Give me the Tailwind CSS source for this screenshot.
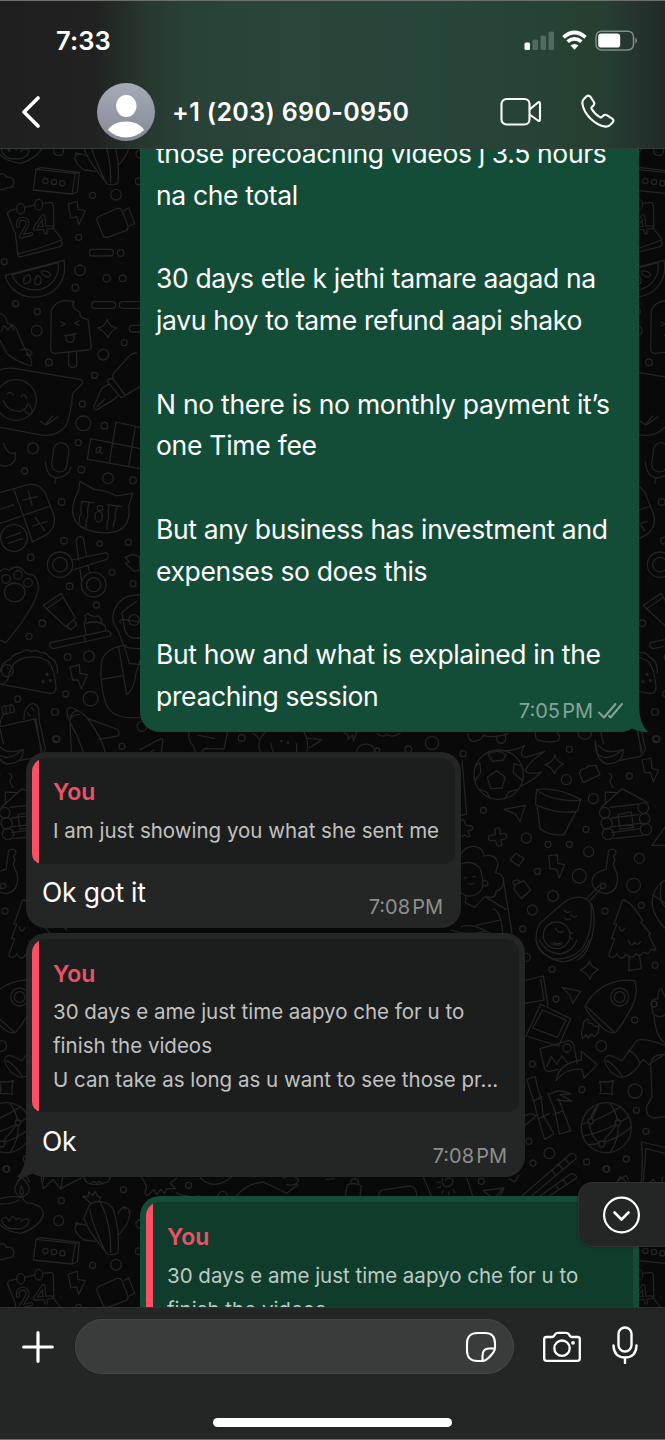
<!DOCTYPE html>
<html lang="en">
<head>
<meta charset="utf-8">
<meta name="viewport" content="width=device-width, initial-scale=1">
<title>Chat</title>
<script src="https://cdn.jsdelivr.net/npm/@tailwindcss/browser@4"></script>
</head>
<body class="bg-black">
<div class="relative flex h-[1440px] w-[665px] flex-col overflow-hidden bg-[#090909] font-['Inter','Liberation_Sans',sans-serif] text-white">

  <!-- Header: status bar and contact bar -->
  <header class="relative z-10 flex h-[149px] flex-none flex-col border-t border-b border-t-[#6c716e] border-b-[#313c37] bg-[linear-gradient(90deg,#1f1f1f_0%,#202120_14%,#27382f_22%,#294238_29%,#2a453a_45%,#27453a_62%,#254436_80%,#26402f_88%,#263e34_91%,#24332d_96%,#212a27_100%)]">
    <div class="flex h-[78px] flex-none items-center justify-between pr-[27px] pl-[56px]">
      <div class="pt-[3px] text-[25.500px] font-semibold tracking-[0.1px]">7:33</div>
      <svg class="h-[30px] w-[114px]" viewBox="0 0 114 30" fill="none">
        <rect x="0.5" y="17.500" width="5.500" height="7.500" rx="1.500" fill="#fff"/>
        <rect x="8.500" y="14.500" width="5.500" height="10.500" rx="1.500" fill="#536a60"/>
        <rect x="16.500" y="10.500" width="5.500" height="14.500" rx="1.500" fill="#536a60"/>
        <rect x="24.500" y="6.500" width="5.500" height="18.500" rx="1.500" fill="#536a60"/>
        <g stroke="#fff" stroke-width="3.700">
          <path d="M39.500 12.300 Q50.500 2.700 61.500 12.300"/>
          <path d="M43.600 16.700 Q50.500 10.900 57.400 16.700"/>
        </g>
        <path d="M46.500 20.600 Q50.500 17.600 54.500 20.600 L50.500 24.800Z" fill="#fff"/>
        <rect x="72" y="6.200" width="37.500" height="18.800" rx="5.500" stroke="#7d8f87" stroke-width="1.500"/>
        <rect x="74.200" y="8.600" width="22" height="14" rx="3.200" fill="#fff"/>
        <path d="M111.300 12.200 q3.400 3.400 0 6.800Z" fill="#7d8f87"/>
      </svg>
    </div>
    <div class="flex flex-1 items-center pb-[3px] pl-[20px]">
      <svg class="mb-[2px] h-[34px] w-[22px] flex-none" viewBox="0 0 22 34" fill="none" stroke="#fff" stroke-width="3.600" stroke-linecap="round" stroke-linejoin="round"><path d="M18 4 L4 18 L18 32"/></svg>
      <svg class="ml-[55px] h-[58px] w-[58px] flex-none" viewBox="0 0 58 58">
        <defs>
          <linearGradient id="av" x1="0" y1="0" x2="0" y2="1"><stop offset="0" stop-color="#a6abb8"/><stop offset="1" stop-color="#858995"/></linearGradient>
          <clipPath id="avc"><circle cx="29" cy="29" r="25.500"/></clipPath>
        </defs>
        <circle cx="29" cy="29" r="29" fill="url(#av)"/>
        <ellipse cx="29.300" cy="23" rx="10.300" ry="11" fill="#fff"/>
        <ellipse cx="29" cy="51" rx="19" ry="12.500" fill="#fff" clip-path="url(#avc)"/>
      </svg>
      <div class="ml-[17px] w-[238px] flex-none pt-[2px] text-[25px] font-semibold tracking-[0.350px] whitespace-nowrap">+1 (203) 690-0950</div>
      <svg class="ml-[90px] h-[30px] w-[42px] flex-none" viewBox="0 0 42 30" fill="none" stroke="#fff" stroke-width="2.100" stroke-linejoin="round">
        <rect x="1.500" y="2" width="28" height="25.500" rx="5"/>
        <path d="M29.500 12.500 L38 5.500 Q40 4.500 40 6.500 V22.500 Q40 24.600 38 23.500 L29.500 17.500"/>
      </svg>
      <svg class="mb-[2px] ml-[39px] h-[34px] w-[34px] flex-none" viewBox="0 0 34 34" fill="none" stroke="#fff" stroke-width="2.100" stroke-linejoin="round">
        <path d="M3.500 4.300 L6 2 Q8 1 9.600 3 L13 8.300 Q13.800 10 12.600 11.300 L10.700 13.200 Q10.200 14 10.700 15 Q14 20.500 19 23.200 Q20 23.700 20.800 23 L22.800 21.200 Q24.200 20.200 25.800 21.200 L31.500 24.800 Q33.200 26.200 31.800 28.200 L29.800 30.400 Q27.600 32.800 24.500 32.600 C13.500 31 3 20 1.400 9.800 Q1 6.600 3.500 4.300Z"/>
      </svg>
    </div>
  </header>

  <!-- Doodle wallpaper, repeated every 600 by 1070 pixels -->
  <svg class="absolute inset-0 h-[1440px] w-[665px]" viewBox="0 0 665 1440" fill="none" stroke="#242424" stroke-linecap="round" stroke-linejoin="round">
    <defs>
      <g id="tile" stroke-width="3.800">
        <g transform="translate(0 140) scale(.33333)">
          <path d="M0 102 Q18 100 18 112 Q40 108 42 128 Q40 146 20 143 Q8 152 0 148"/>
          <path d="M108 88 L226 100 L216 162 L100 150Z M108 88 L122 83 L238 97 L226 100 M238 97 L232 156 L216 162"/>
          <circle cx="136" cy="123" r="8"/><circle cx="162" cy="126" r="8"/><circle cx="187" cy="130" r="8"/>
          <path d="M50 207 L30 212 Q20 216 24 226 L46 280 L54 345 Q56 352 64 350 L180 320 Q188 316 186 308 L184 298 Q182 290 162 268 L160 196 Q158 186 150 187 L130 190 M75 202 L103 195 M52 342 Q120 326 185 300"/>
          <ellipse cx="62" cy="206" rx="12" ry="16"/><ellipse cx="116" cy="194" rx="12" ry="16"/>
          <path d="M54 258 Q50 238 68 236 Q86 238 82 256 L62 290 L94 282 M106 262 L130 228 L132 250 M104 266 L154 262 M132 252 L138 278" stroke-width="12"/>
          <path d="M54 258 Q50 238 68 236 Q86 238 82 256 L62 290 L94 282 M106 262 L130 228 L132 250 M104 266 L154 262 M132 252 L138 278" stroke="#090909" stroke-width="5"/>
          <path d="M205 192 L232 184 L234 208 L256 212 L236 254 L230 230 L212 234Z"/>
          <path d="M300 228 L350 206 Q362 202 366 212 L384 258 Q386 268 378 272 L322 292 Q312 294 308 284 L290 240 Q290 232 300 228Z M372 212 L386 203 L404 250 L388 258"/>
          <path d="M16 406 L192 361 C202 410 176 456 128 468 C70 482 26 450 16 406Z M36 404 L174 368 C180 400 162 436 122 448 C84 456 50 438 36 404Z"/>
          <path d="M72 430 q-6 -18 12 -26 q12 4 6 20 q-8 10 -18 6Z M104 430 q0 -20 10 -24 q12 6 8 24 q-8 8 -18 0Z M124 394 q18 -6 28 10 q-4 10 -14 6 q-14 -6 -14 -16Z"/>
          <rect x="268" y="328" width="72" height="20" rx="10"/><rect x="275" y="485" width="72" height="20" rx="10"/><rect x="358" y="485" width="80" height="20" rx="10"/><rect x="388" y="556" width="60" height="20" rx="10"/>
          <path d="M154 510 Q166 484 198 482 L222 484 Q210 504 240 516 Q236 536 264 538 L274 618 Q274 628 264 630 L166 640 Q152 640 152 626Z M206 640 V676 Q218 690 230 676 V637 M182 546 L196 552 L184 558 M238 542 L224 550 L238 556 M194 586 Q210 588 228 580 M198 588 V600 Q212 614 222 600 V584"/>
          <path d="M322 538 Q328 560 350 564 Q330 574 324 594 Q316 574 292 564 Q316 560 322 538Z"/>
          <path d="M0 520 Q20 526 22 550 Q46 554 50 570 Q74 630 92 656 Q98 668 92 678 Q46 664 20 640 Q6 610 0 602 M4 574 L12 556 L24 570 L34 554 L42 572 M62 630 Q88 622 96 640 Q90 650 78 644"/>
          <path d="M0 690 Q20 680 60 688 L240 718 Q250 720 246 732 L218 760 Q212 830 196 860 Q172 888 130 886 L0 862"/>
          <circle cx="48" cy="780" r="61"/><path d="M10 782 Q24 816 60 814 Q76 812 84 790 M22 762 Q30 750 40 766 M64 770 Q72 756 80 776 M72 806 q10 22 22 14 q6 -8 -6 -26 M122 844 L136 854 L158 828 M140 854 L174 830"/>
          <path d="M410 640 Q402 636 388 648 L340 700 L338 716 L376 766 L420 740 M338 716 Q326 714 322 724 L362 772 Q372 774 376 766 M326 734 L306 744 L282 798 Q280 812 292 808 L346 776 L352 768 M290 800 L314 778"/>
          <path d="M348 846 L420 862 M272 896 L420 926 M264 958 L420 986 M348 846 L328 968 M272 896 L262 958 M406 860 L386 978"/>
          <path d="M304 922 Q288 918 288 936 Q294 946 302 924 L300 938 Q302 944 308 938"/>
          <path d="M10 910 Q26 950 46 938 Q50 972 20 978 Q4 980 0 974"/>
          <rect x="158" y="908" width="46" height="88" rx="23" transform="rotate(8 181 952)"/><path d="M136 966 Q140 1012 172 1014 Q204 1010 214 982 M168 1014 L164 1030"/>
          <circle cx="278" cy="166" r="9"/><circle cx="348" cy="164" r="16"/><circle cx="236" cy="292" r="9"/><circle cx="362" cy="339" r="10"/><circle cx="320" cy="415" r="11"/><circle cx="368" cy="415" r="10"/><circle cx="240" cy="391" r="16"/><circle cx="226" cy="443" r="10"/><circle cx="13" cy="365" r="9"/><circle cx="47" cy="491" r="9"/><circle cx="112" cy="515" r="9"/><circle cx="110" cy="572" r="16"/><circle cx="147" cy="667" r="10"/><circle cx="310" cy="644" r="16"/><circle cx="373" cy="608" r="9"/><circle cx="284" cy="706" r="9"/><circle cx="247" cy="792" r="9"/><circle cx="250" cy="850" r="22"/><circle cx="313" cy="857" r="10"/><circle cx="99" cy="925" r="16"/><circle cx="235" cy="908" r="9"/><circle cx="74" cy="993" r="9"/><circle cx="244" cy="989" r="10"/>
        </g>
        <g transform="translate(0 460) scale(.33333)">
          <path d="M0 98 L84 74 Q116 68 134 96 L160 160 Q172 200 140 224 L96 246 M0 190 L146 140 M42 90 L98 246 M0 148 L42 134 M68 120 L112 110 M86 94 L96 136 M98 198 L142 184 M106 172 L134 212"/>
          <circle cx="42" cy="234" r="40"/><path d="M18 234 L62 218 M24 250 L68 236"/>
          <path d="M240 64 L282 88 Q316 90 350 108 L398 100 L386 140 Q394 196 350 214 Q300 226 254 206 Q216 188 218 144 Q224 108 236 92Z"/>
          <path d="M244 124 L282 128 M246 126 q-6 20 -2 34 q-10 14 -4 30 M268 128 q-8 20 -4 40 q-8 14 -6 36 M322 134 L364 140 M328 136 q-6 20 -2 38 q-8 14 -4 34 M352 140 q-10 24 -6 38 q-8 16 -6 22"/><circle cx="300" cy="144" r="8"/><ellipse cx="296" cy="170" rx="11" ry="16"/>
          <circle cx="180" cy="314" r="38"/><circle cx="180" cy="314" r="22"/><circle cx="281" cy="374" r="37"/><circle cx="281" cy="374" r="21"/>
          <path d="M216 300 L318 278 Q330 286 320 298 L218 330 M236 300 L228 240 Q236 224 250 234 L260 290 M264 318 L270 340 M240 326 L244 360"/>
          <circle cx="18" cy="357" r="13"/><circle cx="54" cy="345" r="13"/><circle cx="84" cy="368" r="13"/><ellipse cx="44" cy="397" rx="31" ry="28"/>
          <path d="M0 334 Q8 322 28 330 Q50 312 70 330 Q80 346 98 344 Q118 358 114 392 Q100 450 18 548 L0 540"/>
          <path d="M130 436 L184 400 L190 412 L140 446Z M140 446 L198 500 L226 474 L190 412 M200 498 L212 510 L230 494 L222 482"/>
          <path d="M150 548 L322 512 Q336 516 332 528 L160 566 Q146 562 150 548Z M250 526 L258 546 M258 522 L252 488 Q262 480 254 468 L264 460 Q272 472 296 468 Q308 480 304 490 Q320 496 316 512 M258 490 Q280 482 304 490"/>
          <path d="M420 404 Q370 404 350 436 Q332 466 342 492 Q358 516 370 556 Q380 566 420 566 M410 424 Q384 440 366 458 L372 500 Q378 540 420 534 M362 490 Q356 480 366 478 L420 486"/><circle cx="402" cy="480" r="16"/>
          <path d="M378 556 Q322 560 306 600 Q300 640 304 664 Q310 720 324 744 Q350 780 420 772 M304 658 L366 648 M356 562 L380 704 Q402 690 408 640 L420 602 M374 562 L388 610 L420 614"/>
          <path d="M0 636 Q6 604 32 598 Q40 580 64 578 Q76 564 94 574 Q110 568 122 578 Q140 576 146 590 Q176 604 172 640 M0 672 Q16 672 24 656 Q30 612 60 598 Q110 580 146 606 Q164 628 168 680 Q168 702 150 700 L0 672"/><circle cx="22" cy="632" r="18"/><g fill="#242424"><circle cx="141" cy="643" r="3"/><circle cx="129" cy="665" r="3"/><circle cx="151" cy="661" r="3"/><circle cx="23" cy="625" r="1"/><circle cx="30" cy="635" r="1"/></g>
          <path d="M210 622 L238 614 L240 640 L262 644 L244 686 L234 660 L218 660Z"/>
          <path d="M6 746 Q4 738 18 738 L34 734 Q44 738 42 756 L10 764Z M18 740 V760 M30 738 V756 M72 778 Q70 740 98 730 Q114 734 116 750 L118 784 L136 864 Q134 882 118 890 L56 902 M2 800 L108 776 L124 880 M0 806 L10 850 M8 768 Q0 780 0 800 M104 780 L126 876 M82 758 L90 768 M94 742 L102 752"/>
          <path d="M200 756 Q200 740 218 744 Q254 758 270 786 Q300 826 318 880 M200 756 Q206 786 228 820 Q240 850 250 876 M210 780 Q216 762 240 764 M210 772 Q218 754 232 752 M264 776 L352 808 Q362 818 354 828 L296 838 M210 790 L214 876"/>
          <path d="M398 283 L418 290 L420 330 L402 334 L376 310 L388 306 L376 292Z"/>
          <circle cx="324" cy="55" r="16"/><circle cx="399" cy="61" r="10"/><circle cx="185" cy="126" r="10"/><circle cx="192" cy="242" r="10"/><circle cx="299" cy="251" r="8"/><circle cx="385" cy="247" r="9"/><circle cx="92" cy="292" r="10"/><circle cx="336" cy="337" r="9"/><circle cx="209" cy="379" r="10"/><circle cx="399" cy="371" r="9"/><circle cx="289" cy="435" r="9"/><circle cx="127" cy="490" r="10"/><circle cx="87" cy="529" r="9"/><circle cx="203" cy="591" r="10"/><circle cx="267" cy="589" r="16"/><circle cx="197" cy="702" r="9"/><circle cx="53" cy="717" r="9"/><circle cx="272" cy="716" r="22"/><circle cx="165" cy="756" r="10"/><circle cx="168" cy="837" r="10"/><circle cx="366" cy="859" r="9"/><circle cx="426" cy="799" r="15"/>
        </g>
        <g transform="translate(440 720) scale(.33333)">
          <circle cx="176" cy="164" r="74"/>
          <path d="M142 172 L170 152 L196 172 L186 204 L152 206Z M144 104 Q170 84 198 104 L190 120 L158 124Z M106 138 L120 128 L122 158 L106 182 M244 138 L222 130 L220 158 L246 180 M118 208 L140 216 L150 236 M232 208 L206 216 L194 236"/>
          <path d="M194 92 Q230 92 254 76 Q232 108 258 112 L314 94 Q266 128 256 150 Q262 166 304 156 Q276 184 242 198"/>
          <path d="M344 104 Q350 126 370 132 Q350 142 344 162 Q338 142 314 134 Q340 128 344 104Z"/>
          <path d="M418 160 L424 148 L436 146 L444 138 L468 136 L480 164 L430 188Z M508 160 Q520 168 512 178 Q506 186 520 202"/>
          <path d="M290 208 Q350 200 422 238 Q414 246 360 238 Q310 230 290 208Z M290 208 L286 254 Q350 284 412 274 L422 238 M292 262 L300 326 Q330 348 372 344 L408 276"/>
          <path d="M466 62 L472 100 Q500 130 550 88 Q552 130 500 132 Q464 118 466 62Z M476 76 Q496 106 550 88"/>
          <path d="M606 120 L632 114 L636 146 L656 150 L640 186 L632 158 L614 158Z"/>
          <path d="M484 262 L546 206 L624 248 M496 250 V216 L528 218 M510 262 L596 252 M514 294 L596 284 M518 320 L604 310 M516 338 L600 326 M520 356 L610 346 M534 284 L574 276 L580 322 L540 328Z"/>
          <circle cx="494" cy="278" r="16"/><circle cx="500" cy="310" r="17"/><circle cx="504" cy="342" r="17"/><circle cx="610" cy="264" r="16"/><circle cx="614" cy="296" r="16"/><circle cx="618" cy="328" r="17"/>
          <path d="M192 268 L256 256 L240 304 L226 282Z"/>
          <path d="M164 328 Q176 318 180 330 V342 L194 340 Q208 348 194 358 L182 360 L186 374 Q178 384 170 374 L166 362 L150 362 Q140 352 150 346 L166 344Z"/>
          <path d="M64 300 Q72 296 74 306 L78 316 L94 318 Q104 326 92 330 L84 334 L90 348 Q82 354 74 344 L66 350"/>
          <path d="M228 400 L252 416 L236 438 L210 420Z M326 408 L352 404 L354 430 L374 434 L358 474 L350 448 L330 446Z"/>
          <path d="M226 494 L252 482 L272 510 L244 536 L222 508Z M226 498 Q212 484 224 482 Q238 476 240 488"/>
          <path d="M498 448 L506 392 Q512 384 526 390 L528 400 L520 410 L526 420 L520 430 L524 446 Q538 466 530 496 Q520 522 492 520 Q458 514 456 486 Q456 458 498 448Z M484 504 L450 542 M478 496 L440 536"/><circle cx="489" cy="498" r="8"/>
          <path d="M300 610 L376 544 Q424 516 452 550 Q462 630 426 686 Q390 722 340 716 Q274 690 292 628Z M456 554 Q474 620 442 688 Q430 710 412 720"/><circle cx="350" cy="646" r="40"/>
          <path d="M372 570 q10 12 18 4 M392 584 q10 12 18 4 M374 594 q10 10 18 2 M346 624 q8 18 24 10 M340 668 q12 6 24 0 M388 636 l10 4 M388 652 l10 6"/>
          <path d="M548 540 L522 612 L530 614 L514 656 L524 656 L506 706 Q518 720 530 702 Q546 726 558 702 Q574 722 588 700 Q598 716 612 696 Q628 708 632 688 L648 690 L626 644 L632 642 L602 606 L608 602 Q570 540 548 540Z M538 620 q6 24 16 4 M566 662 q8 24 16 4 q12 14 20 -2"/>
          <path d="M64 400 Q80 376 108 380 Q130 386 132 408 Q166 400 174 430 Q172 446 166 458 Q194 462 190 490 Q186 510 168 514 Q168 538 140 530 M64 432 Q92 420 116 440 Q130 458 128 500 Q118 530 84 528 Q66 524 62 516 M130 482 q14 -2 14 8 q-2 10 -14 6 M72 476 l8 -4 M98 470 l8 0 M84 490 q8 6 16 0 M78 530 L76 548 L104 562 L134 530 L198 568 M190 480 L216 640 M160 566 Q184 576 188 640 M108 616 L180 600 M62 552 L50 560 M34 630 Q80 648 140 634 M64 620 Q100 608 150 640 M66 120 L80 282 L64 286"/>
          <path d="M636 376 L690 300 M636 376 H690 M690 474 Q640 490 636 550 Q640 590 680 630 M664 490 Q650 550 690 572 M638 524 L690 560"/>
          <circle cx="69" cy="101" r="9"/><circle cx="388" cy="88" r="9"/><circle cx="379" cy="179" r="15"/><circle cx="460" cy="236" r="15"/><circle cx="568" cy="168" r="9"/><circle cx="650" cy="57" r="9"/><circle cx="130" cy="271" r="9"/><circle cx="259" cy="354" r="15"/><circle cx="438" cy="328" r="9"/><circle cx="324" cy="373" r="9"/><circle cx="388" cy="373" r="9"/><circle cx="446" cy="395" r="15"/><circle cx="598" cy="415" r="15"/><circle cx="292" cy="454" r="9"/><circle cx="418" cy="468" r="21"/><circle cx="581" cy="496" r="21"/><circle cx="339" cy="528" r="16"/><circle cx="277" cy="570" r="15"/><circle cx="495" cy="573" r="9"/><circle cx="604" cy="556" r="9"/><circle cx="248" cy="627" r="9"/><circle cx="434" cy="38" r="20"/>
          <path d="M84 40 Q84 66 104 64 Q126 60 130 46 Q160 56 204 40 M170 50 Q170 72 186 70 Q200 66 196 44 M286 38 Q284 62 302 62 Q330 70 354 62 Q364 48 352 38"/>
        </g>
        <g transform="translate(500 940) scale(.33333)">
          <path d="M388 50 L386 92 L424 86 L418 44"/>
          <path d="M268 62 Q272 82 296 88 Q276 98 270 118 Q262 98 240 90 Q264 82 268 62Z M186 142 L242 154 L218 190 L210 166Z"/>
          <path d="M266 180 Q320 112 404 122 Q420 166 386 218 Q370 250 346 278 Q322 282 298 254 Q252 210 256 198Z M260 200 L342 276"/><circle cx="359" cy="171" r="27"/><circle cx="359" cy="171" r="16"/>
          <path d="M264 236 Q246 244 250 260 Q240 276 248 296 L258 284 L264 294 L274 282 L284 290 Q300 278 296 258 Q280 262 276 250 Q264 254 264 236Z"/>
          <path d="M78 120 L130 108 L144 196 M76 190 L132 180 M122 118 L132 180 M122 192 L212 236 L176 318 L78 288Z M128 210 L198 240 L172 292 L98 264Z"/>
          <path d="M120 326 L206 302 Q218 302 222 318 L232 372 M120 326 L134 388 Q138 396 148 394 L176 388 M140 380 L154 350 L170 372 L186 348 L204 370"/><circle cx="201" cy="324" r="12"/>
          <path d="M168 422 Q176 370 244 360 V334 L292 374 L252 414 L246 388 Q200 382 168 422Z"/>
          <path d="M314 364 Q314 342 336 348 Q356 356 366 362 Q390 330 410 302 Q430 292 495 316 M314 364 Q326 400 360 412 Q392 412 416 376 L430 358 L446 374 L495 342 M320 362 Q340 370 366 408 M386 330 Q414 346 420 372"/>
          <path d="M298 424 Q318 430 340 422 Q332 444 338 464 Q318 458 300 462 Q306 444 298 424Z"/>
          <circle cx="319" cy="563" r="75"/><path d="M246 552 Q300 540 362 500 M250 588 Q330 570 386 530 M266 614 Q340 610 394 560 M296 492 Q240 560 302 614 M330 490 Q380 560 330 638 M272 544 L296 492 M304 612 L354 548"/><g fill="#090909"><circle cx="272" cy="544" r="8"/><circle cx="354" cy="548" r="8"/><circle cx="305" cy="612" r="9"/></g>
          <path d="M80 418 L106 410 L112 440 L124 480 L130 526 L162 582 L134 598 L116 540 L100 480Z M100 484 L126 470 M116 536 L148 520 M144 460 L166 516 L178 582 L212 572 L190 514 L176 476 M160 524 L190 512 M150 462 Q180 444 212 462 L180 464 L216 484 L170 480 M76 526 Q96 516 108 528 L76 556"/>
          <path d="M66 768 L214 640 Q230 640 228 656 L94 768 M120 768 L212 702 Q230 700 230 714 L148 768 M196 656 L206 670 M176 672 L188 688 M156 690 L166 706 M190 718 L198 732 M166 734 L176 748"/>
          <path d="M28 716 L44 726 L56 706 M0 746 L12 744 L0 768 M352 724 L378 706 L388 726 M424 724 Q430 660 424 606 L495 622 M430 724 L438 626 L495 640"/>
          <path d="M460 224 Q452 190 456 182 Q464 176 474 176 Q474 146 484 146 L495 170 M460 224 Q480 236 495 224 M462 230 Q468 290 495 310 M495 344 Q460 340 452 370 L456 470 L440 500 Q436 530 462 534 L495 530"/>
          <circle cx="462" cy="192" r="9"/>
          <path d="M108 0 Q120 54 190 66 Q250 54 268 0 M118 0 Q140 40 180 42 Q220 34 230 0 M156 12 q16 6 30 0"/>
          <circle cx="79" cy="52" r="12"/><circle cx="156" cy="88" r="9"/><circle cx="465" cy="76" r="9"/><circle cx="168" cy="177" r="9"/><circle cx="404" cy="240" r="9"/><circle cx="304" cy="318" r="16"/><circle cx="97" cy="372" r="9"/><circle cx="246" cy="449" r="9"/><circle cx="405" cy="453" r="21"/><circle cx="409" cy="511" r="9"/><circle cx="438" cy="574" r="9"/><circle cx="87" cy="604" r="9"/><circle cx="148" cy="640" r="16"/><circle cx="99" cy="669" r="9"/><circle cx="260" cy="666" r="9"/><circle cx="379" cy="657" r="9"/><circle cx="320" cy="687" r="9"/>
        </g>
        <g transform="translate(0 1150) scale(.33333)">
          <path d="M60 80 Q78 90 88 112 Q88 136 66 140 Q44 136 44 112 Q50 104 60 80Z M64 108 q12 20 2 26 q-12 -4 -2 -26Z M68 138 Q66 148 80 158 Q130 164 130 192 Q120 232 62 250 Q20 246 0 224 M0 146 Q30 136 62 142 M0 162 Q40 162 56 150 M4 210 Q16 192 28 214 Q36 188 48 210 Q60 196 64 214 Q78 200 88 212 Q80 240 46 236 Q14 240 4 210Z"/>
          <path d="M262 180 Q270 152 300 154 Q334 160 340 180 Q360 240 354 308 Q340 318 322 312 Q262 240 252 204Z M270 178 Q274 220 318 308 M302 158 Q334 220 332 308 M272 160 L248 138 L264 140 L266 126 L278 136 L286 124 L292 138 L302 142 L296 156 M354 192 Q360 172 378 172 Q396 180 386 208 Q376 234 358 252 M256 226 Q232 214 224 234 Q230 258 254 270 L286 274 M228 228 l0 -10 l14 6 M366 174 l6 -4 l4 8 M386 186 l6 -4"/>
          <path d="M124 82 L130 116 L160 88 L182 118 L188 82 M182 116 L244 84 M252 82 Q256 104 290 104 Q330 100 330 82 M274 100 l8 -6 l8 6 l8 -6 l8 6"/>
          <path d="M424 82 Q444 108 438 118 Q430 136 444 136 L462 118 L470 134 L482 118 L494 130 L500 116 L528 116 L510 100 L530 84 M528 128 Q560 144 600 138 M600 82 Q640 124 694 82 M710 138 Q740 100 790 96 L840 120 L860 130 L894 104 M850 84 Q880 70 896 90 Q890 110 860 104"/>
          <circle cx="370" cy="119" r="9"/><circle cx="184" cy="152" r="9"/><circle cx="176" cy="212" r="15"/><circle cx="566" cy="106" r="9"/><circle cx="18" cy="57" r="9"/><circle cx="668" cy="138" r="14"/><circle cx="420" cy="222" r="12"/><circle cx="416" cy="304" r="10"/>
          <path d="M980 88 l24 -2 M1036 136 L1042 104 Q1064 96 1084 108 L1080 138 M1052 100 Q1050 86 1066 86 Q1078 90 1076 104 M1136 136 Q1136 118 1160 118 L1230 108 Q1250 112 1250 136 M1270 82 L1294 138 M1400 82 L1418 138 M1336 90 Q1350 76 1360 92 Q1356 112 1336 110 Q1322 100 1328 84 M1310 96 l10 2 M1312 114 l10 -4 M1326 130 l4 -8 M1346 134 l0 -8 M1364 128 l-4 -8 M1450 122 L1510 114 L1490 138 M1450 122 L1470 138"/><circle cx="1444" cy="94" r="9"/>
        </g>
        <g transform="translate(140 725) scale(.33333)">
          <path d="M0 74 L60 42 Q70 38 68 50 L64 82 M34 80 l8 -6 M148 22 Q142 48 160 62 L166 80 M172 30 L222 40 M262 24 L252 72 L194 70 L186 80 M340 24 L360 44 Q378 14 384 20 M360 44 Q352 66 362 80 M392 54 Q394 70 400 80 M470 56 L470 80 M492 22 Q508 46 500 80 M504 40 L546 44 L508 68 M612 24 Q628 26 624 44 L638 30 L640 48 L650 22 M712 26 Q730 40 740 28 Q760 40 780 24 M650 80 Q656 54 684 58 Q706 62 702 80"/>
          <circle cx="424" cy="48" r="2"/><circle cx="444" cy="53" r="2"/><circle cx="305" cy="39" r="10"/><circle cx="876" cy="54" r="20"/><circle cx="805" cy="73" r="10"/><circle cx="712" cy="76" r="7"/>
        </g>
      </g>
    </defs>
    <use href="#tile"/>
    <use href="#tile" x="-600"/>
    <use href="#tile" x="600"/>
    <use href="#tile" y="-1070"/>
    <use href="#tile" x="600" y="-1070"/>
    <use href="#tile" y="1070"/>
    <use href="#tile" x="600" y="1070"/>
    <use href="#tile" x="-600" y="1070"/>
  </svg>

  <!-- Messages -->
  <main class="relative flex min-h-0 flex-1 flex-col overflow-hidden">
    <div class="relative -mt-[16px] mr-[26px] ml-auto w-[499px] flex-none rounded-b-[20px] bg-[#144d37] px-4 pb-[14px] text-[26.500px] leading-[41.780px] tracking-[-0.350px] whitespace-nowrap">
      <p>those precoaching videos j 3.5 hours<br>na che total</p>
      <p class="mt-[41.780px]">30 days etle k jethi tamare aagad na<br>javu hoy to tame refund aapi shako</p>
      <p class="mt-[41.780px] tracking-[-0.270px]">N no there is no monthly payment it’s<br>one Time fee</p>
      <p class="mt-[41.780px]">But any business has investment and<br>expenses so does this</p>
      <p class="mt-[41.780px]">But how and what is explained in the<br>preaching session</p>
      <div class="absolute right-[15px] bottom-[8px] flex items-center gap-[4px] text-[20px] leading-[26px] tracking-normal text-[#84a498]">
        <span class="[word-spacing:-3.500px]">7:05 PM</span>
        <svg class="h-[18px] w-[27px]" viewBox="0 0 27 18" fill="none" stroke="currentColor" stroke-width="2" stroke-linecap="round" stroke-linejoin="round"><path d="M2 10.500 L7 15.500 L18.500 2 M12 14 L13.500 15.500 L25 2"/></svg>
      </div>
      <svg class="absolute -right-[9px] bottom-0 h-[26px] w-[29px]" viewBox="0 0 29 26"><path d="M0 26 Q8 26 13 22.500 Q20 26.500 29 26 Q20 17 20 0 H10Z" fill="#144d37"/></svg>
    </div>

    <div class="relative mt-5 ml-[26px] flex h-[176px] w-[435px] flex-none flex-col rounded-[20px] bg-[#242625] p-[6px]">
      <div class="flex h-[106px] flex-none overflow-hidden rounded-[14px] rounded-b-[10px] bg-[#1c1e1d] whitespace-nowrap">
        <div class="w-[7px] flex-none bg-[#fb5065]"></div>
        <div class="pt-[17px] pl-[14px] leading-[34px]">
          <div class="text-[23px] font-semibold text-[#eb5267]">You</div>
          <div class="mt-[5px] text-[20.500px] text-[#c1c2c1]">I am just showing you what she sent me</div>
        </div>
      </div>
      <div class="mt-[7px] pl-[10px] text-[26.500px] leading-[42px] tracking-[-0.200px]">Ok got it</div>
      <div class="absolute right-[18px] bottom-[8px] text-[20px] leading-[26px] text-[#8e8f8e] [word-spacing:-3.500px]">7:08 PM</div>
    </div>

    <div class="relative mt-[5px] ml-[26px] flex h-[244px] w-[499px] flex-none flex-col rounded-[20px] bg-[#242625] p-[6px]">
      <div class="flex h-[173px] flex-none overflow-hidden rounded-[14px] rounded-b-[10px] bg-[#1c1e1d] whitespace-nowrap">
        <div class="w-[7px] flex-none bg-[#fb5065]"></div>
        <div class="pt-[18px] pl-[14px] leading-[34px]">
          <div class="text-[23px] font-semibold text-[#eb5267]">You</div>
          <div class="mt-1 text-[20.500px] text-[#c1c2c1]">30 days e ame just time aapyo che for u to<br>finish the videos<br>U can take as long as u want to see those pr...</div>
        </div>
      </div>
      <div class="mt-[8px] pl-[10px] text-[26.500px] leading-[42px] tracking-[-0.200px]">Ok</div>
      <div class="absolute right-[18px] bottom-[8px] text-[20px] leading-[26px] text-[#8e8f8e] [word-spacing:-3.500px]">7:08 PM</div>
      <svg class="absolute bottom-0 -left-[9px] h-[26px] w-[29px]" viewBox="0 0 29 26"><path d="M29 26 Q21 26 16 22.500 Q9 26.500 0 26 Q9 17 9 0 H19Z" fill="#242625"/></svg>
    </div>

    <div class="mt-[19px] mr-[26px] ml-auto flex h-[240px] w-[499px] flex-none flex-col rounded-[20px] bg-[#144d37] p-[6px]">
      <div class="flex h-[173px] flex-none overflow-hidden rounded-[14px] bg-[#103d2b] whitespace-nowrap">
        <div class="w-[7px] flex-none bg-[#fb5065]"></div>
        <div class="pt-[18px] pl-[14px] leading-[34px]">
          <div class="text-[23px] font-semibold text-[#eb5267]">You</div>
          <div class="mt-[5px] text-[20.500px] text-[#bccbc5]">30 days e ame just time aapyo che for u to<br>finish the videos</div>
        </div>
      </div>
    </div>

    <!-- Scroll to latest -->
    <button class="absolute -right-px bottom-[60px] flex h-[65px] w-[88px] items-center justify-center rounded-l-[14px] border border-[#303231] bg-[#242625] shadow-[0_0_3px_rgba(0,0,0,0.400)]">
      <svg class="h-[38px] w-[38px]" viewBox="0 0 38 38" fill="none" stroke="#fff" stroke-width="2.200" stroke-linecap="round" stroke-linejoin="round"><circle cx="18.500" cy="19" r="17.400"/><path d="M11.500 16.500 L18.500 23.500 L25.500 16.500" stroke-width="2.600"/></svg>
    </button>
  </main>

  <!-- Composer -->
  <footer class="relative flex h-[133px] flex-none flex-col border-t border-b border-t-[#303231] border-b-[#6c6e6d] bg-[#242625]">
    <div class="mt-[11px] flex h-[55px] items-center">
      <svg class="ml-[22px] h-[32px] w-[32px] flex-none" viewBox="0 0 32 32" stroke="#fff" stroke-width="3.200" stroke-linecap="round"><path d="M1.700 16 H30.300 M16 1.700 V30.300"/></svg>
      <div class="ml-[21px] flex h-[55px] w-[439px] flex-none items-center justify-end rounded-full border border-[#464847] bg-[#3a3c3b] pr-[16px]">
        <svg class="h-[32px] w-[32px]" viewBox="0 0 32 32" fill="none" stroke="#fff" stroke-width="2.100" stroke-linejoin="round"><path d="M17.500 30 H12.500 Q2 30 2 19.500 V12.500 Q2 2 12.500 2 H20 Q30 2 30 12.500 V17 C30 21 22 30 17.500 30 V25 Q17.500 17.500 24 17.500 H30"/></svg>
      </div>
      <svg class="ml-[29px] h-[32px] w-[38px] flex-none" viewBox="0 0 38 32" fill="none" stroke="#fff" stroke-width="2.300" stroke-linejoin="round"><path d="M3.500 6 H9 Q10.500 6 11.300 4.700 L12.300 3 Q13.200 1.800 14.800 1.800 H23.200 Q24.800 1.800 25.700 3 L26.700 4.700 Q27.500 6 29 6 H34.500 Q36.800 6 36.800 8.200 V27.500 Q36.800 29.800 34.500 29.800 H3.500 Q1.200 29.800 1.200 27.500 V8.200 Q1.200 6 3.500 6Z"/><circle cx="19" cy="17.200" r="7.700"/><circle cx="30" cy="11.800" r="1.900" fill="#fff" stroke="none"/></svg>
      <svg class="mb-[3px] ml-[31px] h-[38px] w-[26px] flex-none" viewBox="0 0 26 38" fill="none" stroke="#fff" stroke-width="2.400" stroke-linecap="round"><rect x="6.500" y="1.500" width="13" height="24" rx="6.500"/><path d="M1.500 19.500 Q2 31.500 13 31.500 Q24 31.500 24.500 19.500 M13 31.500 V37"/></svg>
    </div>
    <div class="mt-[44px] ml-[213px] h-[9px] w-[239px] rounded-full bg-white"></div>
  </footer>
</div>
</body>
</html>
